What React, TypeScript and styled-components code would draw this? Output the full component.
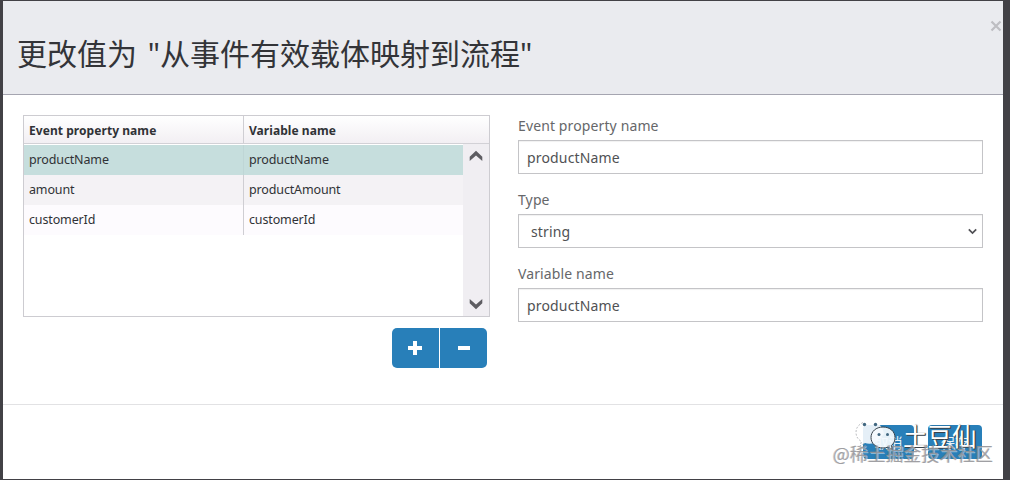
import React from 'react';
import styled, { createGlobalStyle } from 'styled-components';

const Global = createGlobalStyle`
  * { box-sizing: border-box; }
  body { margin: 0; background: #424146; font-family: "Noto Sans", "Noto Sans CJK SC", sans-serif; }
`;

const Backdrop = styled.div`
  width: 1010px;
  height: 480px;
  padding: 1px 7px 1px 3px;
  overflow: hidden;
  background: #424146;
`;

const Dialog = styled.div`
  position: relative;
  height: 478px;
  display: flex;
  flex-direction: column;
  background: #fff;
`;

const Header = styled.header`
  height: 94px;
  display: flex;
  justify-content: space-between;
  padding: 31px 0 0 14px;
  background: #eaebef;
  border-bottom: 1px solid #a5a5b0;
`;

const Title = styled.h2`
  margin: 0;
  font-size: 30px;
  line-height: 44px;
  font-weight: 400;
  color: #333438;
  white-space: pre;
  word-spacing: 3px;
  font-family: "Noto Sans", "Noto Sans CJK SC", sans-serif;
`;

const Close = styled.button`
  align-self: flex-start;
  margin: -12px 1px 0 0;
  padding: 0;
  border: 0;
  background: none;
  line-height: 0;
`;

const Body = styled.main`
  height: 309px;
  display: flex;
  gap: 28px;
  padding: 20px 20px 0;
`;

const GridColumn = styled.section`
  width: 467px;
  display: flex;
  flex-direction: column;
`;

const Grid = styled.div`
  height: 202px;
  border: 1px solid #cdccd1;
`;

const GridHead = styled.div`
  display: flex;
  height: 28px;
  border-bottom: 1px solid #d2d1d6;
  background: linear-gradient(#fff, #f2eff3);
`;

const GridBody = styled.div`
  display: flex;
  height: 172px;
`;

const Rows = styled.div`
  width: 439px;
  padding-top: 1px;
`;

const Row = styled.div<{ $tone: string }>`
  display: flex;
  height: 30px;
  background: ${(p) => p.$tone};
`;

const Cell = styled.div<{ $head?: boolean; $first?: boolean; $selected?: boolean }>`
  flex: 0 0 ${(p) => (p.$first ? '220px' : '219px')};
  padding-left: 5px;
  border-right: ${(p) => (p.$first ? `1px solid ${p.$selected ? '#bfd6d6' : '#cfced3'}` : '0')};
  font-size: ${(p) => (p.$head ? '12px' : '12.5px')};
  letter-spacing: ${(p) => (p.$head ? '0.06px' : '-0.14px')};
  font-weight: ${(p) => (p.$head ? 700 : 400)};
  line-height: 29px;
  color: #303236;
`;

const Scrollbar = styled.div`
  width: 26px;
  display: flex;
  flex-direction: column;
  align-items: center;
  justify-content: space-between;
  padding: 6px 0;
  background: #f0eef2;
`;

const Tools = styled.div`
  display: flex;
  gap: 1px;
  align-self: flex-end;
  margin: 11px 3px 0 0;
`;

const ToolButton = styled.button<{ $side: 'left' | 'right' }>`
  width: 47px;
  height: 40px;
  padding: 0 ${(p) => (p.$side === 'left' ? '1px' : '0')} 0 0;
  border: 0;
  border-radius: ${(p) => (p.$side === 'left' ? '5px 0 0 5px' : '0 5px 5px 0')};
  background: #287fb9;
  display: flex;
  align-items: center;
  justify-content: center;
`;

const Form = styled.section`
  width: 465px;
`;

const Field = styled.label`
  display: block;
  height: 74px;
`;

const FieldName = styled.span`
  display: block;
  height: 25px;
  font-size: 14px;
  letter-spacing: 0.12px;
  line-height: 22px;
  color: #66676a;
`;

const FieldBox = styled.span<{ $select?: boolean }>`
  display: flex;
  align-items: center;
  justify-content: space-between;
  height: 34px;
  padding: 1px 5px 0 ${(p) => (p.$select ? '12px' : '8px')};
  border: 1px solid #c4c4c7;
  box-shadow: inset 0 1px 1px rgba(0, 0, 0, 0.06);
  font-size: 14px;
  letter-spacing: 0.16px;
  line-height: 32px;
  color: #505154;
`;

const Footer = styled.footer`
  flex: 1;
  display: flex;
  justify-content: flex-end;
  gap: 14px;
  padding: 20px 21px 0;
  border-top: 1px solid #e2e2e4;
`;

const Action = styled.button<{ $width: number }>`
  width: ${(p) => p.$width}px;
  height: 34px;
  padding: 0;
  border: 0;
  border-radius: 4px;
  background: #287fb9;
  color: #e8f2f8;
  font: 14px "Noto Sans CJK SC", sans-serif;
`;

const Brand = styled.div`
  position: absolute;
  left: 852px;
  top: 418px;
  display: flex;
  font: 24.5px/34px "Noto Sans CJK SC", sans-serif;
  color: #fff;
  text-shadow: 1px 1px 0 #39424a, 1px 0 1px #39424a;
`;

const Watermark = styled.div`
  position: absolute;
  left: 830px;
  top: 439px;
  font: 17.9px/26px "Noto Sans CJK SC", sans-serif;
  white-space: nowrap;
  color: rgba(150, 150, 154, 0.85);
  text-shadow: 1px 1px 0 rgba(255, 255, 255, 0.45), -1px 0 0 rgba(110, 110, 115, 0.35);
`;

const Arrow = ({ down }: { down?: boolean }) => (
  <svg width="14" height="12" viewBox="0 0 14 12">
    <path d={down ? 'M.7 1v4.200L7 11.200l6.300-6V1L7 6.600z' : 'M.7 11V6.800L7 .8l6.300 6V11L7 5.400z'} fill="#5e5d62" />
  </svg>
);

const ChatBubbles = () => (
  <svg width="48" height="36" viewBox="0 0 48 36">
    <path d="M15 2C7 2 1 7 1 13.500c0 4 2 7 5.500 9L5 27l5-3q4 1.500 10 0l9-9C28 7 22 2 15 2z" fill="#fff" fillOpacity=".88" />
    <path d="M8 3.500C3 6 1 9 1 13.500c0 4 2 7 5.500 9L5 27l5-3" fill="none" stroke="#a0a3a8" strokeWidth=".7" strokeDasharray="2 1.500" />
    <path d="M28 8c-7 0-12 4.500-12 10.500S21 29 28 29q3 0 5-1l4.500 2.500-1.200-4C39 24.500 40 22 40 18.500 40 12.500 35 8 28 8z" fill="#f5fafd" fillOpacity=".93" stroke="#39444d" strokeWidth="1" />
    <g fill="#416780"><circle cx="9.500" cy="5.500" r="1.700" /><circle cx="20.500" cy="5.500" r="1.700" /><circle cx="24" cy="15.500" r="1.500" /><circle cx="32.500" cy="15.500" r="1.500" /></g>
  </svg>
);

const records = [
  { property: 'productName', variable: 'productName', tone: '#c6dedd', selected: true },
  { property: 'amount', variable: 'productAmount', tone: '#f4f2f5' },
  { property: 'customerId', variable: 'customerId', tone: '#fdfbfe' },
];

export default function App() {
  return (
    <Backdrop>
      <Global />
      <Dialog>
        <Header>
          <Title>更改值为 "从事件有效载体映射到流程"</Title>
          <Close aria-label="Close">
            <svg width="12" height="12" viewBox="0 0 12 12">
              <path d="m1.500 1.500 9 9m0-9-9 9" stroke="#bebec2" strokeWidth="2.200" />
            </svg>
          </Close>
        </Header>
        <Body>
          <GridColumn>
            <Grid>
              <GridHead>
                <Cell $head $first>Event property name</Cell>
                <Cell $head>Variable name</Cell>
              </GridHead>
              <GridBody>
                <Rows>
                  {records.map(({ property, variable, tone, selected }) => (
                    <Row key={property} $tone={tone}>
                      <Cell $first $selected={selected}>{property}</Cell>
                      <Cell>{variable}</Cell>
                    </Row>
                  ))}
                </Rows>
                <Scrollbar><Arrow /><Arrow down /></Scrollbar>
              </GridBody>
            </Grid>
            <Tools>
              <ToolButton $side="left" aria-label="Add">
                <svg width="14" height="14" viewBox="0 0 14 14"><path d="M7 0v14M0 7h14" stroke="#fff" strokeWidth="4" /></svg>
              </ToolButton>
              <ToolButton $side="right" aria-label="Remove">
                <svg width="12" height="14" viewBox="0 0 12 14"><path d="M0 7h12" stroke="#fff" strokeWidth="4" /></svg>
              </ToolButton>
            </Tools>
          </GridColumn>
          <Form>
            <Field><FieldName>Event property name</FieldName><FieldBox>productName</FieldBox></Field>
            <Field>
              <FieldName>Type</FieldName>
              <FieldBox $select>
                string
                <svg width="9" height="7" viewBox="0 0 9 7"><path d="m.8 1.300 3.700 3.700 3.700-3.700" fill="none" stroke="#505055" strokeWidth="1.700" /></svg>
              </FieldBox>
            </Field>
            <Field><FieldName>Variable name</FieldName><FieldBox>productName</FieldBox></Field>
          </Form>
        </Body>
        <Footer>
          <Action $width={51}>取消</Action>
          <Action $width={54}>保存</Action>
        </Footer>
        <Brand><ChatBubbles />土豆仙</Brand>
        <Watermark>@稀土掘金技术社区</Watermark>
      </Dialog>
    </Backdrop>
  );
}
